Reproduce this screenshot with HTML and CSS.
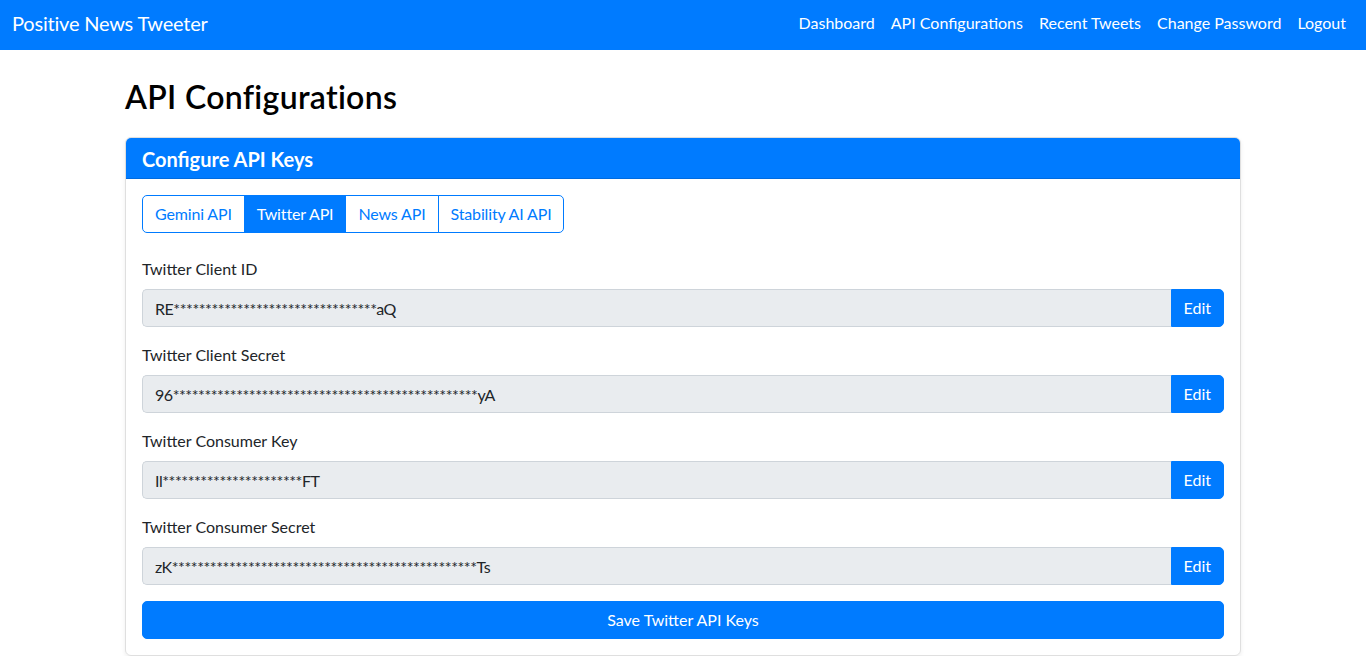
FILE: index.html
```html
<!DOCTYPE html>
<html lang="en">
<head>
<meta charset="utf-8">
<title>API Configurations</title>
<link rel="stylesheet" href="styles.css">
</head>
<body>
<nav class="navbar">
  <a class="brand" href="#">Positive News Tweeter</a>
  <ul class="nav-links">
    <li><a href="#">Dashboard</a></li>
    <li><a href="#">API Configurations</a></li>
    <li><a href="#">Recent Tweets</a></li>
    <li><a href="#">Change Password</a></li>
    <li><a href="#">Logout</a></li>
  </ul>
</nav>
<main class="container">
  <h1 class="page-title">API Configurations</h1>
  <section class="card">
    <div class="card-header"><h5 class="card-title">Configure API Keys</h5></div>
    <div class="card-body">
      <div class="tab-group">
        <button class="tab">Gemini API</button>
        <button class="tab active">Twitter API</button>
        <button class="tab">News API</button>
        <button class="tab">Stability AI API</button>
      </div>
      <form class="key-form">
        <div class="form-group">
          <label>Twitter Client ID</label>
          <div class="input-group">
            <input class="form-control" type="text" readonly value="RE********************************aQ">
            <button type="button" class="btn-edit">Edit</button>
          </div>
        </div>
        <div class="form-group">
          <label>Twitter Client Secret</label>
          <div class="input-group">
            <input class="form-control" type="text" readonly value="96************************************************yA">
            <button type="button" class="btn-edit">Edit</button>
          </div>
        </div>
        <div class="form-group">
          <label>Twitter Consumer Key</label>
          <div class="input-group">
            <input class="form-control" type="text" readonly value="Il**********************FT">
            <button type="button" class="btn-edit">Edit</button>
          </div>
        </div>
        <div class="form-group">
          <label>Twitter Consumer Secret</label>
          <div class="input-group">
            <input class="form-control" type="text" readonly value="zK************************************************Ts">
            <button type="button" class="btn-edit">Edit</button>
          </div>
        </div>
        <button type="button" class="btn-save">Save Twitter API Keys</button>
      </form>
    </div>
  </section>
</main>
</body>
</html>
```
FILE: styles.css
```css
* { box-sizing: border-box; }
body {
  margin: 0;
  font-family: "Lato", "Roboto", sans-serif;
  font-size: 16px;
  line-height: 1.5;
  color: #212529;
  background: #fff;
}
.navbar {
  display: flex;
  align-items: center;
  justify-content: space-between;
  height: 50px;
  padding: 0 12px 4px 12px;
  background: #007bff;
}
.brand {
  color: #fff;
  text-decoration: none;
  font-size: 20px;
  line-height: 30px;
  letter-spacing: -0.2px;
}
.nav-links {
  display: flex;
  list-style: none;
  margin: 0;
  padding: 0;
}
.nav-links a {
  display: block;
  padding: 8px;
  color: #fff;
  text-decoration: none;
  font-size: 16px;
}
.container {
  width: 1140px;
  margin: 0 auto;
  padding: 0 12px;
}
.page-title {
  margin: 24px 0 21px;
  padding-top: 4px;
  font-size: 32px;
  font-weight: 600;
  line-height: 1.2;
  letter-spacing: 0.3px;
  color: #000;
}
.card {
  border: 1px solid rgba(0,0,0,.125);
  border-radius: 6px;
  box-shadow: 0 2px 4px rgba(0,0,0,.075);
  overflow: hidden;
}
.card-header {
  background: #007bff;
  padding: 9px 16px 7px;
  border-bottom: 1px solid rgba(0,0,0,.125);
}
.card-title {
  margin: 0;
  color: #fff;
  font-size: 20px;
  font-weight: 700;
  line-height: 24px;
}
.card-body { padding: 16px; }
.tab-group { display: inline-flex; }
.tab {
  font: inherit;
  color: #007bff;
  background: #fff;
  border: 1px solid #007bff;
  padding: 6px 12px;
  line-height: 24px;
  margin-left: -1px;
  border-radius: 0;
  letter-spacing: -0.15px;
}
.tab:first-child { margin-left: 0; border-radius: 5px 0 0 5px; }
.tab:last-child { border-radius: 0 5px 5px 0; }
.tab.active { background: #007bff; color: #fff; }
.key-form { margin-top: 24px; }
.form-group { margin-bottom: 16px; }
.form-group label { display: block; margin-bottom: 8px; }
.input-group { display: flex; }
.form-control {
  flex: 1;
  min-width: 0;
  font: inherit;
  letter-spacing: -0.45px;
  color: #212529;
  background: #e9ecef;
  border: 1px solid #ced4da;
  border-right: 0;
  border-radius: 5px 0 0 5px;
  padding: 6px 12px;
  line-height: 24px;
  height: 38px;
}
.btn-edit {
  font: inherit;
  color: #fff;
  background: #007bff;
  border: 1px solid #007bff;
  border-radius: 0 5px 5px 0;
  padding: 6px 12px;
  line-height: 24px;
}
.btn-save {
  display: block;
  width: 100%;
  font: inherit;
  color: #fff;
  background: #007bff;
  border: 1px solid #007bff;
  border-radius: 5px;
  padding: 6px 12px;
  line-height: 24px;
}
```
